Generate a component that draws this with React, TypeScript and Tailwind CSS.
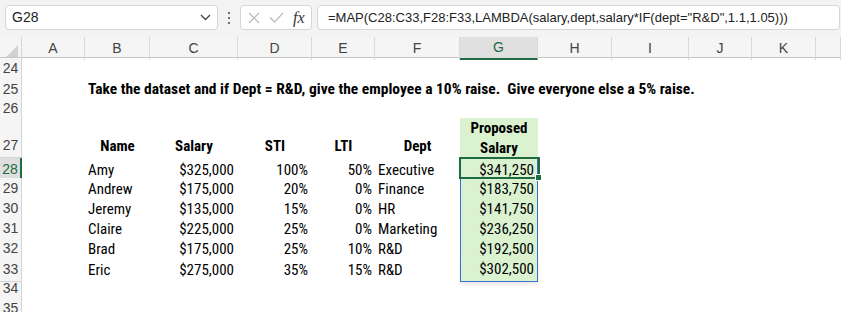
import React from "react";

const GRID =
  "grid grid-cols-[22px_63px_65px_88px_74px_63px_85px_78px_74px_77px_63px_64px_1fr]";

const CELL_FONT = "font-['Liberation_Sans_Narrow','Roboto_Condensed','Liberation_Sans',sans-serif]";

const columns = ["A", "B", "C", "D", "E", "F", "G", "H", "I", "J", "K", ""];

const people = [
  { n: 28, name: "Amy", salary: "$325,000", sti: "100%", lti: "50%", dept: "Executive", proposed: "$341,250" },
  { n: 29, name: "Andrew", salary: "$175,000", sti: "20%", lti: "0%", dept: "Finance", proposed: "$183,750" },
  { n: 30, name: "Jeremy", salary: "$135,000", sti: "15%", lti: "0%", dept: "HR", proposed: "$141,750" },
  { n: 31, name: "Claire", salary: "$225,000", sti: "25%", lti: "0%", dept: "Marketing", proposed: "$236,250" },
  { n: 32, name: "Brad", salary: "$175,000", sti: "25%", lti: "10%", dept: "R&D", proposed: "$192,500" },
  { n: 33, name: "Eric", salary: "$275,000", sti: "35%", lti: "15%", dept: "R&D", proposed: "$302,500" },
];

function RowHead({ n, active, tall }: { n: number; active?: boolean; tall?: boolean }) {
  return (
    <div
      className={`flex justify-center border-b border-r border-[#d4d4d4] font-['Liberation_Sans',sans-serif] text-[14px] font-normal ${
        tall ? "items-end pb-[1px]" : "items-center"
      } ${active ? "border-r-2 border-r-[#1e6b41] bg-[#dedede] text-[#1e6b41]" : "bg-[#f5f5f5] text-[#444]"}`}
    >
      {n}
    </div>
  );
}

function Blank({ n, children }: { n: number; children?: React.ReactNode }) {
  return (
    <div className={`${GRID} h-[20px]`}>
      <RowHead n={n} />
      <div />
      <div className="flex items-center overflow-visible whitespace-nowrap pl-[3px] text-[15.5px] font-bold text-black">
        {children}
      </div>
    </div>
  );
}

function Toolbar() {
  return (
    <div className="flex h-[37px] items-start bg-[#f3f3f3] pl-[5px] pt-[5px] font-['Liberation_Sans',sans-serif]">
      <div className="flex h-[25px] w-[213px] items-center justify-between rounded-[4px] border border-[#d6d6d6] bg-white pl-[6px] pr-[6px]">
        <span className="text-[14px] text-[#222]">G28</span>
        <svg width="11" height="7" viewBox="0 0 11 7" fill="none">
          <path d="M1 1l4.5 4.5L10 1" stroke="#444" strokeWidth="1.3" />
        </svg>
      </div>
      <div className="flex h-[25px] w-[22px] flex-col items-center justify-center gap-[3px]">
        <span className="size-[2px] rounded-full bg-[#444]" />
        <span className="size-[2px] rounded-full bg-[#444]" />
        <span className="size-[2px] rounded-full bg-[#444]" />
      </div>
      <div className="flex h-[25px] w-[72px] items-center rounded-[4px] border border-[#d6d6d6] bg-white pl-[7px]">
        <svg width="12" height="12" viewBox="0 0 12 12" fill="none">
          <path d="M1 1l10 10M11 1L1 11" stroke="#b5b5b5" strokeWidth="1.1" />
        </svg>
        <svg className="ml-[9px]" width="15" height="11" viewBox="0 0 15 11" fill="none">
          <path d="M1 5.5l4.5 4.5L14 1" stroke="#b5b5b5" strokeWidth="1.1" />
        </svg>
        <span className="ml-[9px] font-['Liberation_Serif',serif] text-[16px] italic text-[#333]">fx</span>
      </div>
      <div className="ml-[5px] mr-[1px] flex h-[25px] flex-1 items-center rounded-[4px] border border-[#d6d6d6] bg-white pl-[10px] text-[13px] text-[#222]">
        =MAP(C28:C33,F28:F33,LAMBDA(salary,dept,salary*IF(dept="R&D",1.1,1.05)))
      </div>
    </div>
  );
}

function ColumnHeads() {
  return (
    <div className={`${GRID} h-[21px] border-b border-[#c8c8c8] bg-[#f5f5f5] font-['Liberation_Sans',sans-serif] text-[14px] text-[#444]`}>
      <div className="relative border-r border-[#d4d4d4]">
        <svg className="absolute bottom-[3px] right-[3px]" width="12" height="12" viewBox="0 0 12 12">
          <path d="M12 0v12H0z" fill="#d2d2d2" />
        </svg>
      </div>
      {columns.map((c) => (
        <div
          key={c || "L"}
          className={`flex items-center justify-center border-r border-[#d9d9d9] ${
            c === "G" ? "border-b-2 border-b-[#1e6b41] bg-[#e0e0e0] text-[#1e6b41]" : ""
          }`}
        >
          {c}
        </div>
      ))}
    </div>
  );
}

export default function App() {
  return (
    <div className="h-[312px] w-[841px] overflow-hidden bg-white">
      <Toolbar />
      <ColumnHeads />
      <div className={`${CELL_FONT} text-[15px] text-black`}>
        <Blank n={24} />
        <Blank n={25}>
          Take the dataset and if Dept = R&amp;D, give the employee a 10% raise.&nbsp; Give everyone else a 5% raise.
        </Blank>
        <Blank n={26} />

        <div className={`${GRID} h-[40px] font-bold`}>
          <RowHead n={27} tall />
          <div />
          <div className="flex items-end justify-center pb-[1px]">Name</div>
          <div className="flex items-end justify-center pb-[1px]">Salary</div>
          <div className="flex items-end justify-center pb-[1px]">STI</div>
          <div className="flex items-end justify-center pb-[1px]">LTI</div>
          <div className="flex items-end justify-center pb-[1px]">Dept</div>
          <div className="flex flex-col items-center justify-end bg-[#daf2d0] leading-[20px]">
            <span>Proposed</span>
            <span>Salary</span>
          </div>
        </div>

        <div className="relative">
          {people.map((p, i) => (
            <div key={p.n} className={`${GRID} h-[20px]`}>
              <RowHead n={p.n} active={i === 0} />
              <div />
              <div className="flex items-center pl-[3px]">{p.name}</div>
              <div className="flex items-center justify-end pr-[4px]">{p.salary}</div>
              <div className="flex items-center justify-end pr-[4px]">{p.sti}</div>
              <div className="flex items-center justify-end pr-[3px]">{p.lti}</div>
              <div className="flex items-center pl-[3px]">{p.dept}</div>
              <div
                className={`flex items-center justify-end border-x border-[#3a6fd0] bg-[#daf2d0] pr-[3px] ${
                  i === 0 ? "border-t" : ""
                } ${i === people.length - 1 ? "border-b shadow-[0_3px_4px_rgba(0,0,0,0.08)]" : ""}`}
              >
                {p.proposed}
              </div>
            </div>
          ))}
          {/* active cell G28 */}
          <span className="absolute left-[459px] top-[-1px] z-10 h-[22px] w-[81px] border-2 border-[#1e6b41]" />
          <span className="absolute left-[535px] top-[16px] z-20 size-[7px] border border-white bg-[#1e6b41]" />
        </div>

        <Blank n={34} />
        <Blank n={35} />
      </div>
    </div>
  );
}
